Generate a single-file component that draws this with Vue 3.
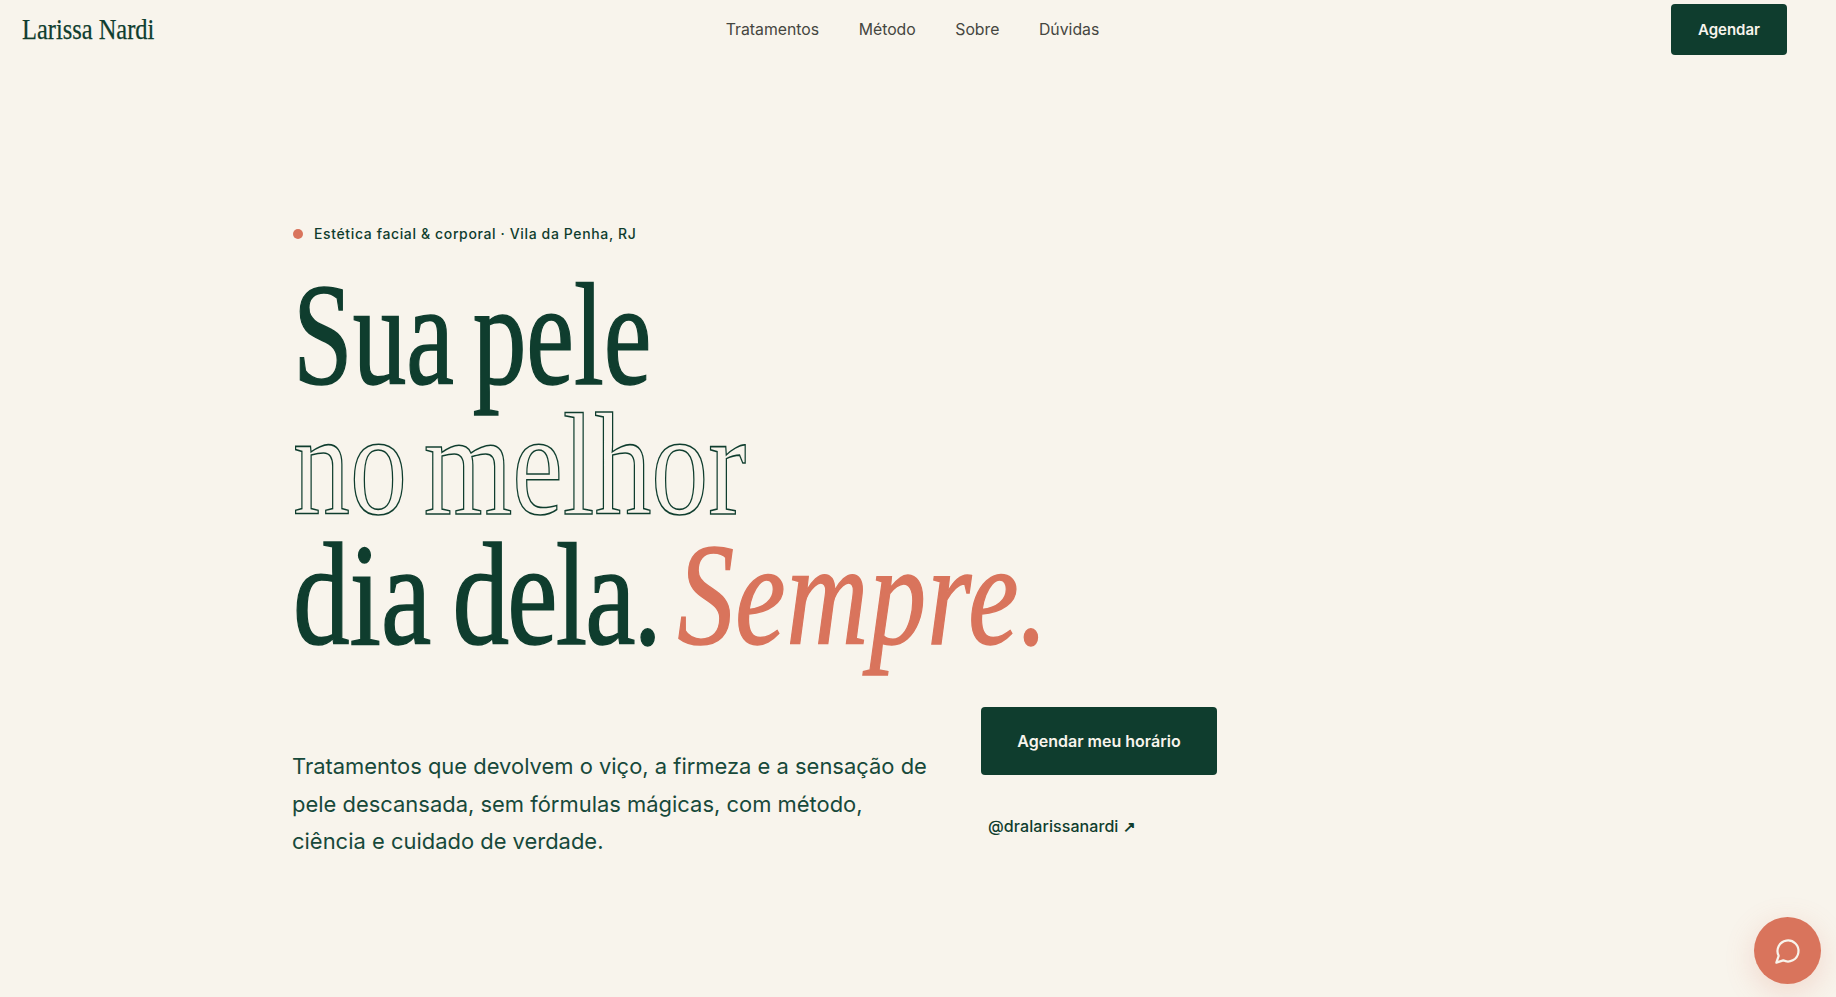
<script setup>
const links = ['Tratamentos', 'Método', 'Sobre', 'Dúvidas']
</script>

<template>
  <div class="page">
    <header class="nav">
      <a class="logo"><span class="logo-text">Larissa Nardi</span></a>
      <nav class="links">
        <a v-for="l in links" :key="l">{{ l }}</a>
      </nav>
      <button class="btn btn-nav">Agendar</button>
    </header>
    <main class="hero">
      <div class="eyebrow"><span class="dot"></span>Estética facial &amp; corporal · Vila da Penha, RJ</div>
      <h1 class="title">
        <span class="line first">Sua pele</span>
        <span class="line outline">no melhor</span>
        <span class="line third">dia <span class="tight">dela.</span> <em>Sempre.</em></span>
      </h1>
      <div class="bottom">
        <p class="lead">Tratamentos que devolvem o viço, a firmeza e a sensação de pele descansada, sem fórmulas mágicas, com método, ciência e cuidado de verdade.</p>
        <div class="actions">
          <button class="btn btn-main">Agendar meu horário</button>
          <a class="handle">@dralarissanardi <span class="arrow">↗</span></a>
        </div>
      </div>
    </main>
    <button class="fab" aria-label="Chat">
      <svg width="28" height="28" viewBox="0 0 24 24" fill="none" stroke="currentColor" stroke-width="1.9" stroke-linecap="round" stroke-linejoin="round">
        <path d="M7.9 20A9 9 0 1 0 4 16.1L2 22Z" />
      </svg>
    </button>
  </div>
</template>

<style>
html, body { margin: 0; background: #f8f4ec; }
</style>

<style scoped>
.page {
  height: 997px;
  overflow: hidden;
  background: #f8f4ec;
  color: #0f3d2e;
  font-family: Inter, "Noto Sans", sans-serif;
}
.nav {
  display: flex;
  justify-content: space-between;
  align-items: center;
  padding: 4px 49px 0 22px;
}
.logo { display: block; width: 132px; height: 51px; line-height: 49px; white-space: nowrap; }
.logo-text {
  display: inline-block;
  font-family: "Liberation Serif", serif;
  font-size: 30px;
  -webkit-text-stroke: .25px;
  transform: scaleX(.815);
  transform-origin: left center;
}
.links { display: flex; gap: 39.5px; margin-top: -1px; }
.links a { font-size: 15.8px; color: #45463f; }
.btn {
  background: #0f3d2e;
  color: #f8f4ec;
  border: 0;
  border-radius: 4px;
  font-family: inherit;
  font-weight: 600;
}
.btn-nav { width: 116px; height: 51px; font-size: 15px; }
.hero { padding: 169px 0 0 293px; }
.eyebrow {
  display: flex;
  align-items: center;
  gap: 11px;
  font-size: 14px;
  font-weight: 500;
  letter-spacing: .045em;
  line-height: 20px;
}
.dot { width: 10px; height: 10px; border-radius: 50%; background: #d9745c; }
.title {
  margin: 26px 0 0;
  font-family: "Liberation Serif", serif;
  font-weight: 400;
  font-size: 146px;
  line-height: 130px;
}
.line {
  display: block;
  white-space: nowrap;
  transform-origin: left center;
  -webkit-text-stroke: 1.5px;
}
.first { transform: scaleX(.735); word-spacing: -11px; }
.third { transform: scaleX(.775); word-spacing: -9px; }
.tight { letter-spacing: -2.4px; }
.outline {
  transform: scaleX(.78);
  word-spacing: -15px;
  color: transparent;
  -webkit-text-stroke: 1.6px #0f3d2e;
}
.title em { color: #d9745c; font-style: italic; letter-spacing: 1.5px; margin-left: -5px; }
.bottom { display: flex; gap: 49px; margin-top: 47px; }
.lead {
  width: 640px;
  margin: 41px 0 0 -1px;
  font-size: 21.95px;
  line-height: 37.6px;
  color: #17493a;
}
.actions { display: flex; flex-direction: column; align-items: flex-start; gap: 41px; }
.btn-main { width: 236px; height: 68px; font-size: 16px; }
.handle { padding-left: 7px; font-size: 16px; font-weight: 500; line-height: 20px; letter-spacing: .005em; }
.arrow { font-family: "Liberation Sans", sans-serif; font-weight: 700; font-size: 15px; }
.fab {
  position: fixed;
  left: 1754px;
  top: 917px;
  width: 67px;
  height: 67px;
  border: 0;
  border-radius: 50%;
  background: #d9745c;
  color: #f8f4ec;
  display: flex;
  align-items: center;
  justify-content: center;
  box-shadow: 0 8px 30px rgba(217, 116, 92, .22);
}
</style>
